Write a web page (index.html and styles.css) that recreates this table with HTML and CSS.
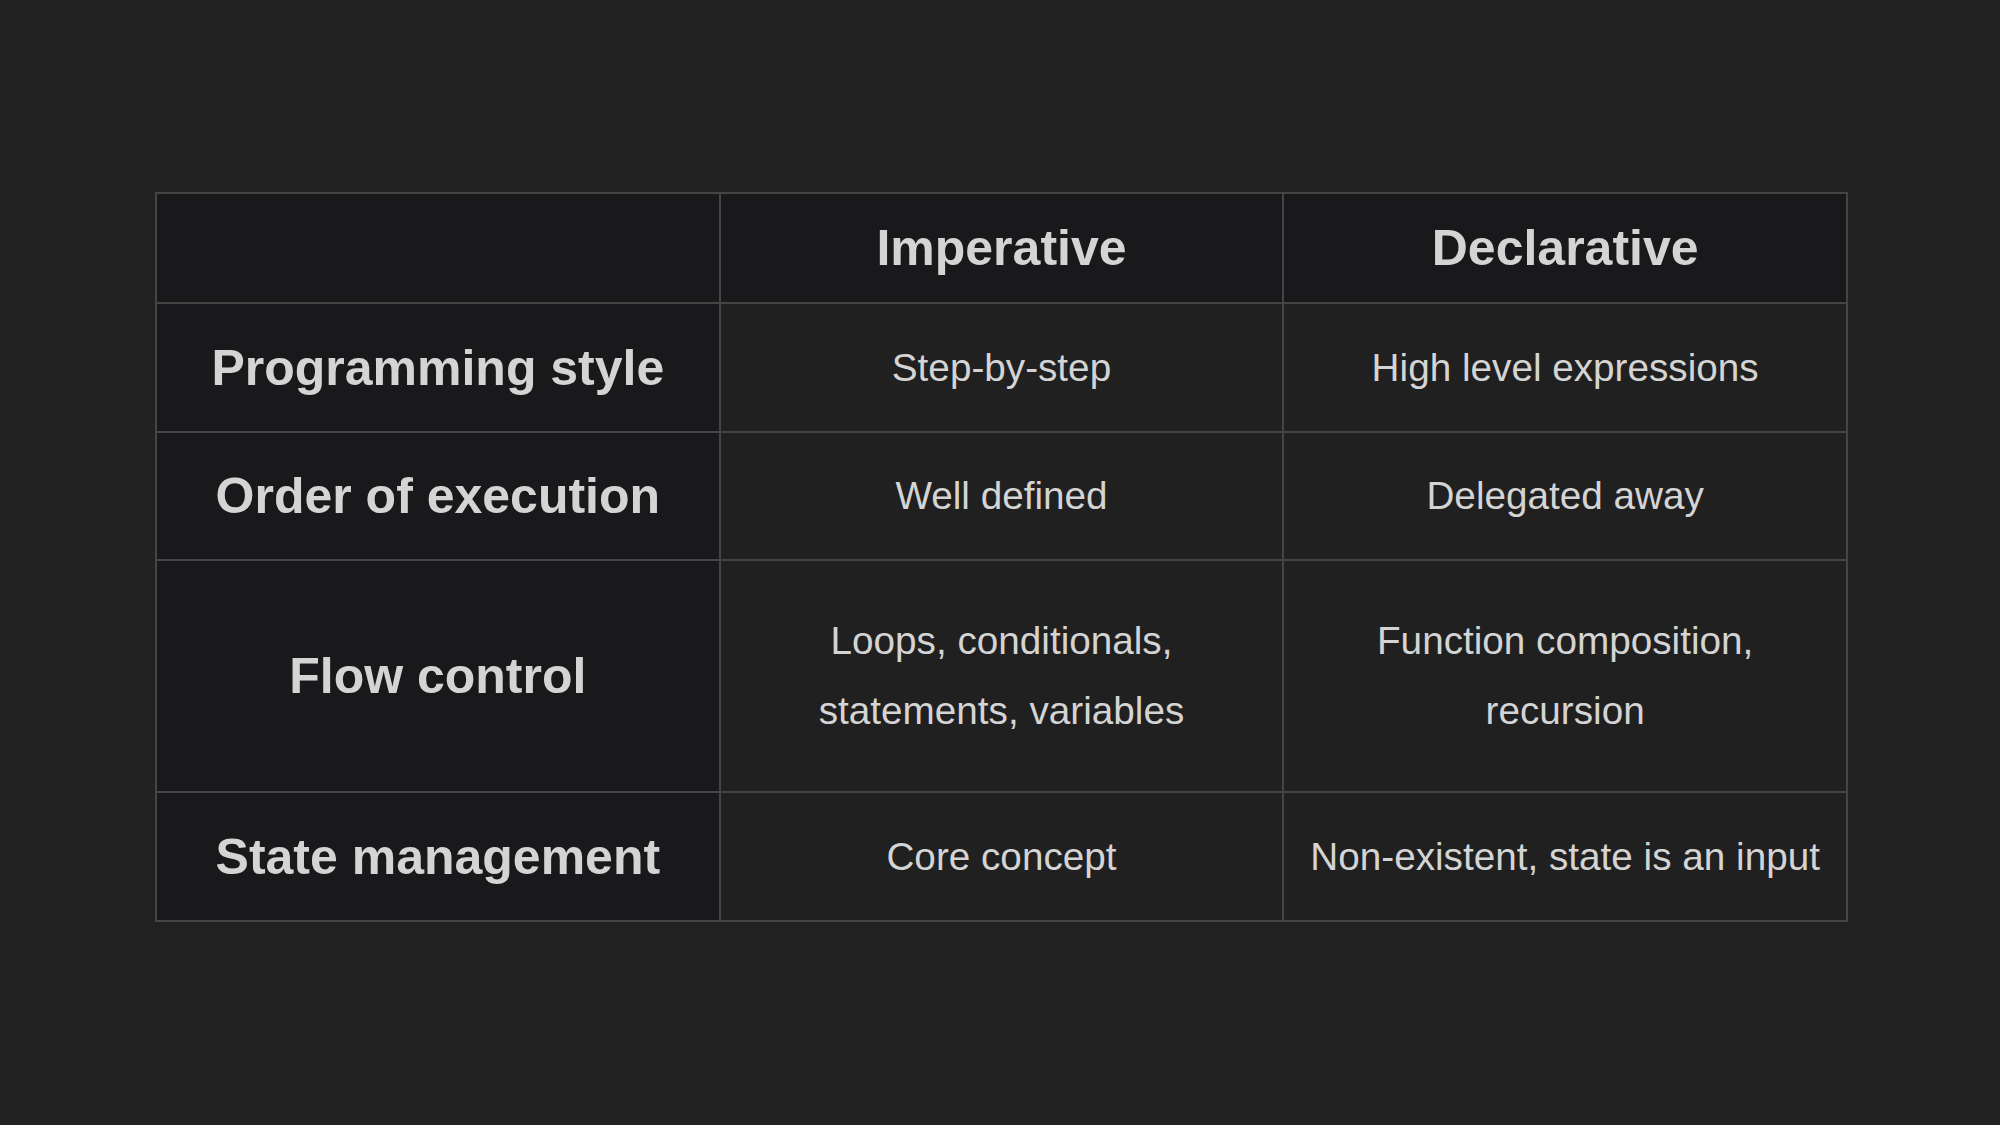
FILE: index.html
```
<!DOCTYPE html>
<html lang="en">
<head>
<meta charset="utf-8">
<title>Imperative vs Declarative</title>
<link rel="stylesheet" href="styles.css">
</head>
<body>
<main class="page">
  <table class="compare">
    <thead>
      <tr class="row-head">
        <th class="corner"></th>
        <th class="col-head">Imperative</th>
        <th class="col-head">Declarative</th>
      </tr>
    </thead>
    <tbody>
      <tr class="row-a">
        <th class="row-head-cell">Programming style</th>
        <td>Step-by-step</td>
        <td>High level expressions</td>
      </tr>
      <tr class="row-b">
        <th class="row-head-cell">Order of execution</th>
        <td>Well defined</td>
        <td>Delegated away</td>
      </tr>
      <tr class="row-c">
        <th class="row-head-cell">Flow control</th>
        <td>Loops, conditionals,<br>statements, variables</td>
        <td>Function composition,<br>recursion</td>
      </tr>
      <tr class="row-d">
        <th class="row-head-cell">State management</th>
        <td>Core concept</td>
        <td>Non-existent, state is an input</td>
      </tr>
    </tbody>
  </table>
</main>
</body>
</html>
```

FILE: styles.css
```
html, body {
  margin: 0;
  padding: 0;
  background: #212121;
}

.page {
  width: 2000px;
  height: 1125px;
  padding: 192px 0 0 155px;
  box-sizing: border-box;
  font-family: "Liberation Sans", Arial, sans-serif;
  color: #d4d4d4;
}

.compare {
  border-collapse: collapse;
  table-layout: fixed;
  width: 1693px;
}

.compare th,
.compare td {
  border: 2px solid #454545;
  text-align: center;
  vertical-align: middle;
  padding: 0;
}

.compare td {
  background: #202020;
  font-size: 38.7px;
  font-weight: 400;
  line-height: 70px;
}

.compare th {
  background: #19191b;
  font-size: 50px;
  font-weight: 700;
  line-height: 60px;
}

.row-head { height: 110px; }
.row-a { height: 129px; }
.row-b { height: 128px; }
.row-c { height: 232px; }
.row-d { height: 129px; }
```
